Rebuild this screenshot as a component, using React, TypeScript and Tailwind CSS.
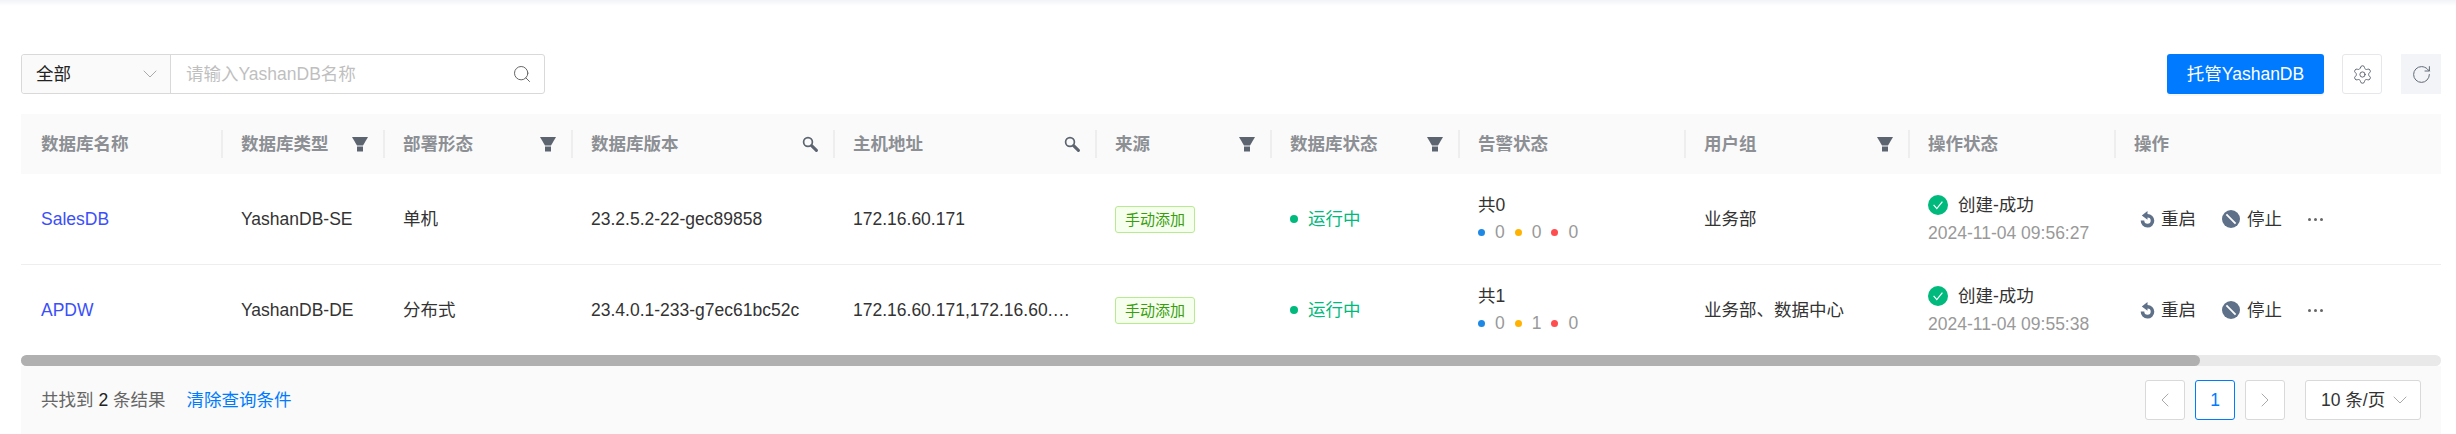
import React from 'react';
import { ChevronDown, ChevronLeft, ChevronRight, RotateCw, Search, Settings } from 'lucide-react';

const gridCols = 'grid grid-cols-[200px_162px_188px_262px_262px_175px_188px_226px_224px_206px_327px]';

const FilterIcon: React.FC = () => (
  <svg width="16" height="15" viewBox="0 0 16 15" className="shrink-0">
    <path d="M0 0H16L11 8.5H5Z" fill="#5c6470" />
    <rect x="5" y="9.5" width="6" height="5" fill="#5c6470" />
  </svg>
);

const KeyIcon: React.FC = () => (
  <svg width="16" height="16" viewBox="0 0 16 16" className="shrink-0">
    <circle cx="6" cy="6" r="4.4" fill="none" stroke="#5c6470" strokeWidth="1.7" />
    <path d="M9.6 9.6L14.4 14.4" stroke="#5c6470" strokeWidth="3" strokeLinecap="round" />
  </svg>
);

const RestartIcon: React.FC = () => (
  <svg width="15" height="17" viewBox="0 0 15 17" className="shrink-0">
    <path d="M7.5 3V0L1.8 4.4L7.5 8.8V6.4A3.2 3.2 0 1 1 4.3 9.6H0.7A6.8 6.8 0 1 0 7.5 3Z" fill="#5f7089" />
  </svg>
);

const StopIcon: React.FC = () => (
  <svg width="18" height="18" viewBox="0 0 18 18" className="shrink-0">
    <circle cx="9" cy="9" r="9" fill="#5f7089" />
    <path d="M4.4 4.4L13.6 13.6" stroke="#fff" strokeWidth="1.8" />
  </svg>
);

const SuccessIcon: React.FC = () => (
  <svg width="20" height="20" viewBox="0 0 20 20" className="shrink-0">
    <circle cx="10" cy="10" r="10" fill="#00b97c" />
    <path d="M5.6 9.8L8.8 13.6L14.4 6.6" fill="none" stroke="#fff" strokeWidth="1.2" />
  </svg>
);

const headers: { title: string; icon?: 'filter' | 'search' }[] = [
  { title: '数据库名称' },
  { title: '数据库类型', icon: 'filter' },
  { title: '部署形态', icon: 'filter' },
  { title: '数据库版本', icon: 'search' },
  { title: '主机地址', icon: 'search' },
  { title: '来源', icon: 'filter' },
  { title: '数据库状态', icon: 'filter' },
  { title: '告警状态' },
  { title: '用户组', icon: 'filter' },
  { title: '操作状态' },
  { title: '操作' },
];

const rows = [
  {
    name: 'SalesDB',
    type: 'YashanDB-SE',
    mode: '单机',
    version: '23.2.5.2-22-gec89858',
    host: '172.16.60.171',
    total: 0,
    alarms: [0, 0, 0],
    group: '业务部',
    time: '2024-11-04 09:56:27',
  },
  {
    name: 'APDW',
    type: 'YashanDB-DE',
    mode: '分布式',
    version: '23.4.0.1-233-g7ec61bc52c',
    host: '172.16.60.171,172.16.60.…',
    total: 1,
    alarms: [0, 1, 0],
    group: '业务部、数据中心',
    time: '2024-11-04 09:55:38',
  },
];

const alarmDots = ['bg-[#1e88e5]', 'bg-[#ffb300]', 'bg-[#ff4d4f]'];

const App: React.FC = () => {
  return (
    <div className="h-[434px] w-[2456px] overflow-hidden bg-white font-['Liberation_Sans','Noto_Sans_CJK_SC',sans-serif] text-[17.5px] text-[#333]">
      <div className="h-[6px] bg-gradient-to-b from-[#f2f3f8] to-white" />
      <div className="pl-[21px] pr-[15px] pt-[48px]">
        <div className="flex items-center justify-between">
          <div className="flex h-[40px] w-[524px] rounded-[3px] border border-[#d9d9d9]">
            <div className="flex w-[149px] items-center justify-between rounded-l-[3px] border-r border-[#d9d9d9] bg-[#fafafa] pl-[14px] pr-[8px] text-[#222]">
              <span>全部</span>
              <ChevronDown size={24} strokeWidth={1} color="#aaa" />
            </div>
            <div className="flex flex-1 items-center justify-between pl-[15px] pr-[12px]">
              <span className="text-[#bfbfbf]">请输入YashanDB名称</span>
              <Search size={20} strokeWidth={1.2} color="#666" />
            </div>
          </div>
          <div className="flex items-center">
            <button className="h-[40px] w-[157px] rounded-[3px] bg-[#007aff] text-white shadow-[0_2px_0_rgba(0,0,0,0.03)]">托管YashanDB</button>
            <button className="ml-[18px] flex h-[40px] w-[40px] items-center justify-center rounded-[3px] border border-[#e5e7eb]">
              <Settings size={21} strokeWidth={1.1} color="#5c6470" />
            </button>
            <button className="ml-[19px] flex h-[40px] w-[40px] items-center justify-center bg-[#f3f4f8]">
              <RotateCw size={21} strokeWidth={1.1} color="#5c6470" />
            </button>
          </div>
        </div>

        <div className="mt-[20px]">
          <div className={`${gridCols} h-[60px] items-center bg-[#fafafa] font-semibold text-[#8c8f94]`}>
            {headers.map((h, i) => (
              <div
                key={h.title}
                className={`flex h-[28px] items-center justify-between pr-[15px] ${i > 0 ? 'border-l-2 border-[#eeeeee] pl-[18px]' : 'pl-[20px]'}`}
              >
                <span>{h.title}</span>
                {h.icon === 'filter' && <FilterIcon />}
                {h.icon === 'search' && <KeyIcon />}
              </div>
            ))}
          </div>

          {rows.map((r, i) => (
            <div key={r.name} className={`${gridCols} items-center ${i === 0 ? 'h-[91px] border-b border-[#eeeeee]' : 'h-[90px]'}`}>
              <div className="pl-[20px] text-[#3b4ffa]">{r.name}</div>
              <div className="pl-[20px]">{r.type}</div>
              <div className="pl-[20px]">{r.mode}</div>
              <div className="pl-[20px]">{r.version}</div>
              <div className="pl-[20px]">{r.host}</div>
              <div className="pl-[20px]">
                <span className="inline-block h-[27px] w-[80px] rounded-[3px] border border-[#b7eb8f] bg-[#f6ffed] text-center text-[15px] leading-[25px] text-[#389e0d]">手动添加</span>
              </div>
              <div className="flex items-center pl-[20px] text-[#00b97c]">
                <span className="mr-[10px] h-[8px] w-[8px] rounded-full bg-[#00b97c]" />
                运行中
              </div>
              <div className="pl-[20px]">
                <div className="leading-[27px]">共{r.total}</div>
                <div className="flex items-center leading-[27px] text-[#999]">
                  {r.alarms.map((n, j) => (
                    <React.Fragment key={j}>
                      <span className={`mr-[10px] h-[7px] w-[7px] rounded-full ${alarmDots[j]}`} />
                      <span className="mr-[10px]">{n}</span>
                    </React.Fragment>
                  ))}
                </div>
              </div>
              <div className="pl-[20px]">{r.group}</div>
              <div className="-mt-px pl-[20px]">
                <div className="flex items-center gap-[10px] leading-[28px]">
                  <SuccessIcon />
                  创建-成功
                </div>
                <div className="leading-[28px] text-[#999]">{r.time}</div>
              </div>
              <div className="flex items-center pl-[26px]">
                <RestartIcon />
                <span className="ml-[6px]">重启</span>
                <span className="ml-[26px]"><StopIcon /></span>
                <span className="ml-[7px]">停止</span>
                <span className="ml-[26px] flex gap-[3px]">
                  <i className="h-[3px] w-[3px] rounded-full bg-[#666]" />
                  <i className="h-[3px] w-[3px] rounded-full bg-[#666]" />
                  <i className="h-[3px] w-[3px] rounded-full bg-[#666]" />
                </span>
              </div>
            </div>
          ))}

          <div className="h-[11px] rounded-full bg-[#e9e9e9]">
            <div className="h-full w-[2179px] rounded-full bg-[#b0b0b0]" />
          </div>

          <div className="flex h-[68px] items-center justify-between bg-[#fafafa] pl-[20px] pr-[20px]">
            <div className="text-[#666]">
              共找到 <span className="text-[#222]">2</span> 条结果
              <span className="ml-[21px] text-[#007aff]">清除查询条件</span>
            </div>
            <div className="flex items-center gap-[10px]">
              <button className="flex h-[40px] w-[40px] items-center justify-center rounded-[3px] border border-[#d9d9d9] bg-white">
                <ChevronLeft size={24} strokeWidth={1} color="#aaa" />
              </button>
              <button className="h-[40px] w-[40px] rounded-[3px] border border-[#007aff] bg-white text-[#007aff]">1</button>
              <button className="flex h-[40px] w-[40px] items-center justify-center rounded-[3px] border border-[#d9d9d9] bg-white">
                <ChevronRight size={24} strokeWidth={1} color="#aaa" />
              </button>
              <div className="ml-[10px] flex h-[40px] w-[116px] items-center justify-between rounded-[3px] border border-[#d9d9d9] bg-white pl-[15px] pr-[8px] text-[#333]">
                <span>10 条/页</span>
                <ChevronDown size={24} strokeWidth={1} color="#aaa" />
              </div>
            </div>
          </div>
        </div>
      </div>
    </div>
  );
};

export default App;
